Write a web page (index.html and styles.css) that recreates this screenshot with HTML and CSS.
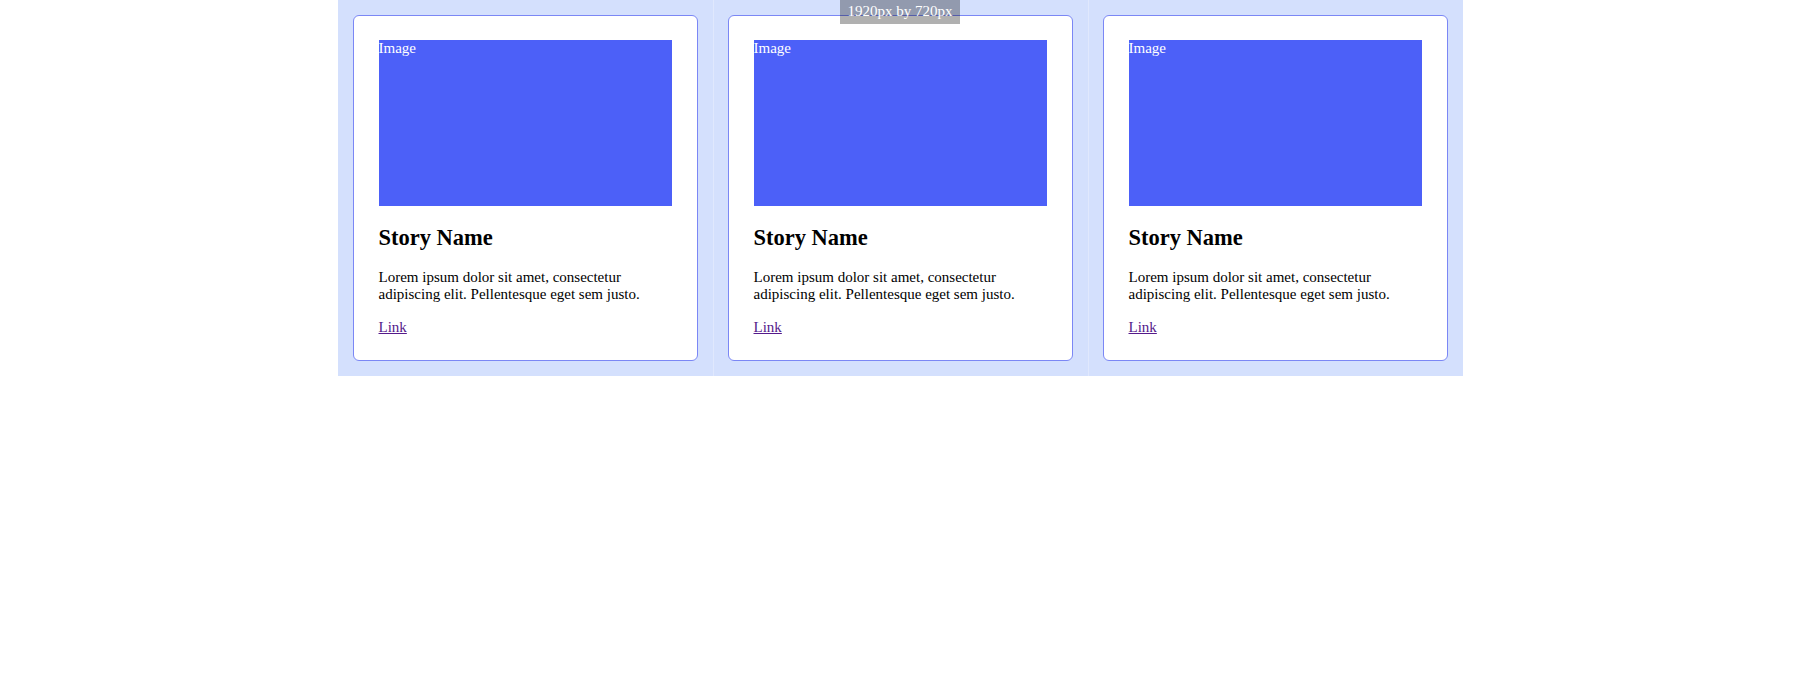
FILE: index.html
```html
<!DOCTYPE html>
<html lang="en">
<head>
<meta charset="utf-8">
<title>Stories</title>
<link rel="stylesheet" href="styles.css">
</head>
<body>
<div class="size-label">1920px by 720px</div>
<main class="stories">
  <div class="column">
    <article class="card">
      <div class="image">Image</div>
      <h2 class="title">Story Name</h2>
      <p class="text">Lorem ipsum dolor sit amet, consectetur adipiscing elit. Pellentesque eget sem justo.</p>
      <p class="more"><a href="#" class="link">Link</a></p>
    </article>
  </div>
  <div class="column">
    <article class="card">
      <div class="image">Image</div>
      <h2 class="title">Story Name</h2>
      <p class="text">Lorem ipsum dolor sit amet, consectetur adipiscing elit. Pellentesque eget sem justo.</p>
      <p class="more"><a href="#" class="link">Link</a></p>
    </article>
  </div>
  <div class="column">
    <article class="card">
      <div class="image">Image</div>
      <h2 class="title">Story Name</h2>
      <p class="text">Lorem ipsum dolor sit amet, consectetur adipiscing elit. Pellentesque eget sem justo.</p>
      <p class="more"><a href="#" class="link">Link</a></p>
    </article>
  </div>
</main>
</body>
</html>
```

FILE: styles.css
```css
html, body {
  margin: 0;
  padding: 0;
  background: #ffffff;
}

body {
  font-family: "Liberation Serif", "Times New Roman", serif;
  font-size: 15px;
  color: #000000;
  position: relative;
}

.size-label {
  position: absolute;
  top: 0;
  left: 840px;
  width: 120px;
  height: 24px;
  box-sizing: border-box;
  padding-top: 3px;
  text-align: center;
  background: rgba(0, 0, 0, 0.31);
  color: #ffffff;
  font-size: 15px;
  line-height: 17px;
  z-index: 2;
}

.stories {
  width: 1125px;
  margin: 0 auto;
  background: #d4e0fd;
  display: grid;
  grid-template-columns: repeat(3, 375px);
}

.column {
  padding: 15px;
  box-sizing: border-box;
}

.column + .column {
  border-left: 1px solid #e0e8fd;
  padding-left: 14px;
}

.card {
  background: #ffffff;
  border: 1px solid #7b87f5;
  border-radius: 6px;
  padding: 24px 25px 23px;
  box-sizing: border-box;
  height: 346px;
}

.image {
  height: 166px;
  background: #4c60f8;
  color: #ffffff;
  line-height: 17px;
}

.title {
  font-size: 22.5px;
  font-weight: bold;
  margin: 18.7px 0 0;
}

.text {
  margin: 18.7px 0 0;
}

.more {
  margin: 15.7px 0 0;
}

.link {
  color: #551a8b;
}
```
